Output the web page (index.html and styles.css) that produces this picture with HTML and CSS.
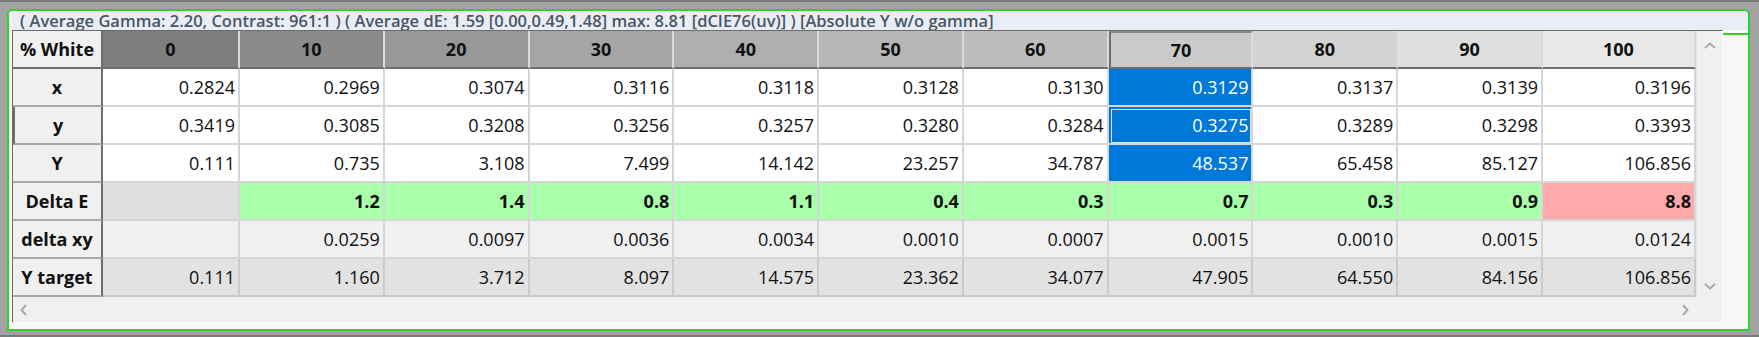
FILE: index.html
```html
<!DOCTYPE html>
<html>
<head>
<meta charset="utf-8">
<link rel="stylesheet" href="styles.css">
</head>
<body>
<div class="screen">
  <div class="frame">
    <div class="title">( Average Gamma: 2.20, Contrast: 961:1 ) ( Average dE: 1.59 [0.00,0.49,1.48] max: 8.81 [dCIE76(uv)] ) [Absolute Y w/o gamma]</div>
    <div class="body-row">
      <div class="panel">
        <div class="viewport">
          <div class="table">
            <div class="cell rh hd">% White</div>
            <div class="cell ch g0">0</div>
            <div class="cell ch g10">10</div>
            <div class="cell ch g20">20</div>
            <div class="cell ch g30">30</div>
            <div class="cell ch g40">40</div>
            <div class="cell ch g50">50</div>
            <div class="cell ch g60">60</div>
            <div class="cell ch g70 selcol">70</div>
            <div class="cell ch g80">80</div>
            <div class="cell ch g90">90</div>
            <div class="cell ch g100">100</div>

            <div class="cell rh">x</div>
            <div class="cell d">0.2824</div>
            <div class="cell d">0.2969</div>
            <div class="cell d">0.3074</div>
            <div class="cell d">0.3116</div>
            <div class="cell d">0.3118</div>
            <div class="cell d">0.3128</div>
            <div class="cell d">0.3130</div>
            <div class="cell d sel">0.3129</div>
            <div class="cell d">0.3137</div>
            <div class="cell d">0.3139</div>
            <div class="cell d">0.3196</div>

            <div class="cell rh cur">y</div>
            <div class="cell d">0.3419</div>
            <div class="cell d">0.3085</div>
            <div class="cell d">0.3208</div>
            <div class="cell d">0.3256</div>
            <div class="cell d">0.3257</div>
            <div class="cell d">0.3280</div>
            <div class="cell d">0.3284</div>
            <div class="cell d sel focus">0.3275</div>
            <div class="cell d">0.3289</div>
            <div class="cell d">0.3298</div>
            <div class="cell d">0.3393</div>

            <div class="cell rh">Y</div>
            <div class="cell d">0.111</div>
            <div class="cell d">0.735</div>
            <div class="cell d">3.108</div>
            <div class="cell d">7.499</div>
            <div class="cell d">14.142</div>
            <div class="cell d">23.257</div>
            <div class="cell d">34.787</div>
            <div class="cell d sel">48.537</div>
            <div class="cell d">65.458</div>
            <div class="cell d">85.127</div>
            <div class="cell d">106.856</div>

            <div class="cell rh">Delta E</div>
            <div class="cell d de-none"></div>
            <div class="cell d de ok">1.2</div>
            <div class="cell d de ok">1.4</div>
            <div class="cell d de ok">0.8</div>
            <div class="cell d de ok">1.1</div>
            <div class="cell d de ok">0.4</div>
            <div class="cell d de ok">0.3</div>
            <div class="cell d de ok">0.7</div>
            <div class="cell d de ok">0.3</div>
            <div class="cell d de ok">0.9</div>
            <div class="cell d de bad">8.8</div>

            <div class="cell rh">delta xy</div>
            <div class="cell d dxy"></div>
            <div class="cell d dxy">0.0259</div>
            <div class="cell d dxy">0.0097</div>
            <div class="cell d dxy">0.0036</div>
            <div class="cell d dxy">0.0034</div>
            <div class="cell d dxy">0.0010</div>
            <div class="cell d dxy">0.0007</div>
            <div class="cell d dxy">0.0015</div>
            <div class="cell d dxy">0.0010</div>
            <div class="cell d dxy">0.0015</div>
            <div class="cell d dxy">0.0124</div>

            <div class="cell rh">Y target</div>
            <div class="cell d yt">0.111</div>
            <div class="cell d yt">1.160</div>
            <div class="cell d yt">3.712</div>
            <div class="cell d yt">8.097</div>
            <div class="cell d yt">14.575</div>
            <div class="cell d yt">23.362</div>
            <div class="cell d yt">34.077</div>
            <div class="cell d yt">47.905</div>
            <div class="cell d yt">64.550</div>
            <div class="cell d yt">84.156</div>
            <div class="cell d yt">106.856</div>
          </div>
          <div class="vscroll">
            <svg class="chev" width="14" height="10" viewBox="0 0 14 10"><polyline points="2,7 7,2.5 12,7" /></svg>
            <svg class="chev" width="14" height="10" viewBox="0 0 14 10"><polyline points="2,3 7,7.5 12,3" /></svg>
          </div>
        </div>
        <div class="hscroll">
          <svg class="chev" width="10" height="14" viewBox="0 0 10 14"><polyline points="7,2 2.5,7 7,12" /></svg>
          <svg class="chev" width="10" height="14" viewBox="0 0 10 14"><polyline points="3,2 7.5,7 3,12" /></svg>
        </div>
      </div>
      <div class="side"></div>
    </div>
  </div>
</div>
</body>
</html>
```

FILE: styles.css
```css
html, body {
  margin: 0;
  padding: 0;
}
body {
  width: 1759px;
  height: 337px;
  overflow: hidden;
  background: #a2a2a2;
  font-family: "Open Sans", "Noto Sans", sans-serif;
}
.screen {
  box-sizing: border-box;
  width: 1759px;
  height: 337px;
  border-top: 2px solid #7a7a7a;
  border-bottom: 2px solid #7a7a7a;
  padding: 7px 0 0 7px;
}
.frame {
  box-sizing: border-box;
  width: 1743px;
  height: 322px;
  border: 2px solid #2fd22f;
  border-radius: 5px 6px 0 0;
  background: #f7f7f7;
  padding-left: 3px;
  display: flex;
  flex-direction: column;
}
.title {
  height: 19px;
  line-height: 19px;
  background: #e9eef6;
  border-radius: 0 5px 0 0;
  padding-left: 8px;
  font-size: 16.5px;
  font-weight: 600;
  color: #4c5562;
  white-space: nowrap;
}
.body-row {
  display: flex;
}
.panel {
  box-sizing: border-box;
  width: 1711px;
  height: 293px;
  border-top: 1px solid #6b6b6b;
  border-left: 1px solid #6b6b6b;
  border-right: 1px solid #ffffff;
  border-bottom: 1px solid #ffffff;
  display: flex;
  flex-direction: column;
  background: #f0f0f0;
}
.side {
  flex: 1;
  margin-top: 3px;
  border-top: 2px solid #2fd22f;
  height: 0;
}
.viewport {
  display: flex;
  height: 266px;
}
.table {
  width: 1683px;
  display: grid;
  grid-template-columns: 90px 137px repeat(9, 1fr) 153px;
  grid-template-rows: repeat(7, 38px);
  background: #ffffff;
}
.cell {
  box-sizing: border-box;
  display: flex;
  align-items: center;
  font-size: 18px;
  color: #111;
  white-space: nowrap;
  border-right: 2px solid #d6d6d6;
  border-bottom: 2px solid #d6d6d6;
}
.rh {
  justify-content: center;
  font-weight: 700;
  background: #f0f0f0;
  border-right: 2px solid #6e6e6e;
  border-bottom: 2px solid #a8a8a8;
}
.rh.hd {
  border-bottom: 2px solid #6e6e6e;
}
.rh.cur {
  border-left: 2px solid #6e6e6e;
}
.ch {
  justify-content: center;
  font-weight: 700;
  border-right: 2px solid #dadada;
  border-bottom: 2px solid #6e6e6e;
}
.g0 { background: #7e7e7e; }
.g10 { background: #8b8b8b; }
.g20 { background: #989898; }
.g30 { background: #a5a5a5; }
.g40 { background: #afafaf; }
.g50 { background: #b6b6b6; }
.g60 { background: #bdbdbd; }
.g70 { background: #cacaca; }
.g80 { background: #d3d3d3; }
.g90 { background: #dedede; }
.g100 { background: #e8e8e8; }
.selcol {
  border-left: 2px solid #707070;
  border-top: 2px solid #8a8a8a;
}
.d {
  justify-content: flex-end;
  padding-right: 3px;
  background: #ffffff;
}
.sel {
  background: #0078d7;
  color: #ffffff;
}
.focus {
  outline: 1px solid #d8e8f8;
  outline-offset: -3px;
}
.de {
  font-weight: 700;
}
.de-none {
  background: #e0e0e0;
}
.ok {
  background: #aaffaa;
}
.bad {
  background: #ffaaaa;
}
.dxy {
  background: #f0f0f0;
}
.yt {
  background: #e2e2e2;
  border-right-color: #cacaca;
  border-bottom-color: #cacaca;
}
.vscroll {
  flex: 1;
  background: #f0f0f0;
  border-left: 1px solid #e6e6e6;
  display: flex;
  flex-direction: column;
  justify-content: space-between;
  align-items: center;
  padding: 10px 0 6px;
}
.hscroll {
  flex: 1;
  display: flex;
  justify-content: space-between;
  align-items: center;
  padding: 0 32px 0 6px;
  background: #f0f0f0;
}
.chev polyline {
  fill: none;
  stroke: #a9a9a9;
  stroke-width: 2;
}
```
